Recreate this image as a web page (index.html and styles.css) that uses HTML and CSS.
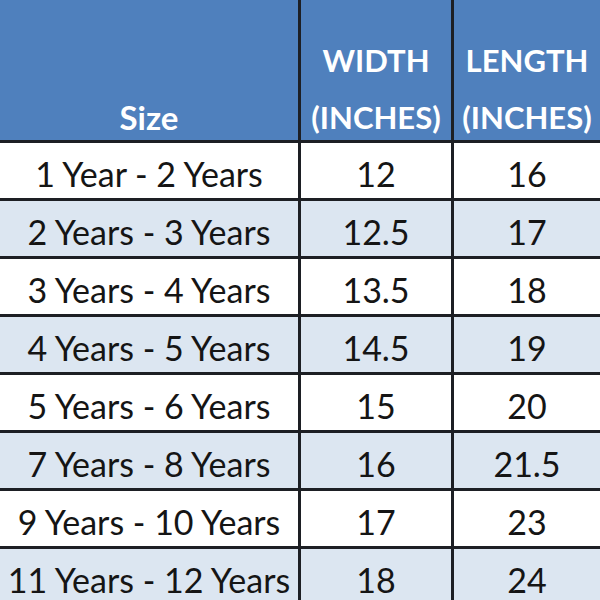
FILE: index.html
```html
<!DOCTYPE html>
<html>
<head>
    <title>Size Chart</title>
    <link rel="stylesheet" href="styles.css">
</head>
<body>
    <div class="chart">
        <div class="head size">Size</div>
        <div class="head">WIDTH<br>(INCHES)</div>
        <div class="head">LENGTH<br>(INCHES)</div>

        <div class="cell">1 Year - 2 Years</div>
        <div class="cell">12</div>
        <div class="cell">16</div>

        <div class="cell alt">2 Years - 3 Years</div>
        <div class="cell alt">12.5</div>
        <div class="cell alt">17</div>

        <div class="cell">3 Years - 4 Years</div>
        <div class="cell">13.5</div>
        <div class="cell">18</div>

        <div class="cell alt">4 Years - 5 Years</div>
        <div class="cell alt">14.5</div>
        <div class="cell alt">19</div>

        <div class="cell">5 Years - 6 Years</div>
        <div class="cell">15</div>
        <div class="cell">20</div>

        <div class="cell alt">7 Years - 8 Years</div>
        <div class="cell alt">16</div>
        <div class="cell alt">21.5</div>

        <div class="cell">9 Years - 10 Years</div>
        <div class="cell">17</div>
        <div class="cell">23</div>

        <div class="cell alt">11 Years - 12 Years</div>
        <div class="cell alt">18</div>
        <div class="cell alt">24</div>
    </div>
</body>
</html>
```

FILE: styles.css
```css
body {
    margin: 0;
    background: #fff;
    font-family: Lato, "Open Sans", sans-serif;
    overflow: hidden;
}

.chart {
    display: grid;
    grid-template-columns: 298px 150px 146px;
    grid-template-rows: 140px repeat(8, 55px);
    gap: 3px;
    background: #1d1f24;
    width: 600px;
}

.head {
    background: #4f80bd;
    color: #fff;
    font-weight: bold;
    font-size: 31px;
    line-height: 57px;
    text-align: center;
    padding-top: 32px;
    box-sizing: border-box;
    white-space: nowrap;
}

.head.size {
    padding-top: 89px;
    font-size: 33px;
}

.cell {
    background: #fff;
    color: #151515;
    font-size: 34px;
    line-height: 55px;
    padding-top: 3px;
    box-sizing: border-box;
    text-align: center;
    white-space: nowrap;
}

.cell.alt {
    background: #dce6f1;
}
```
